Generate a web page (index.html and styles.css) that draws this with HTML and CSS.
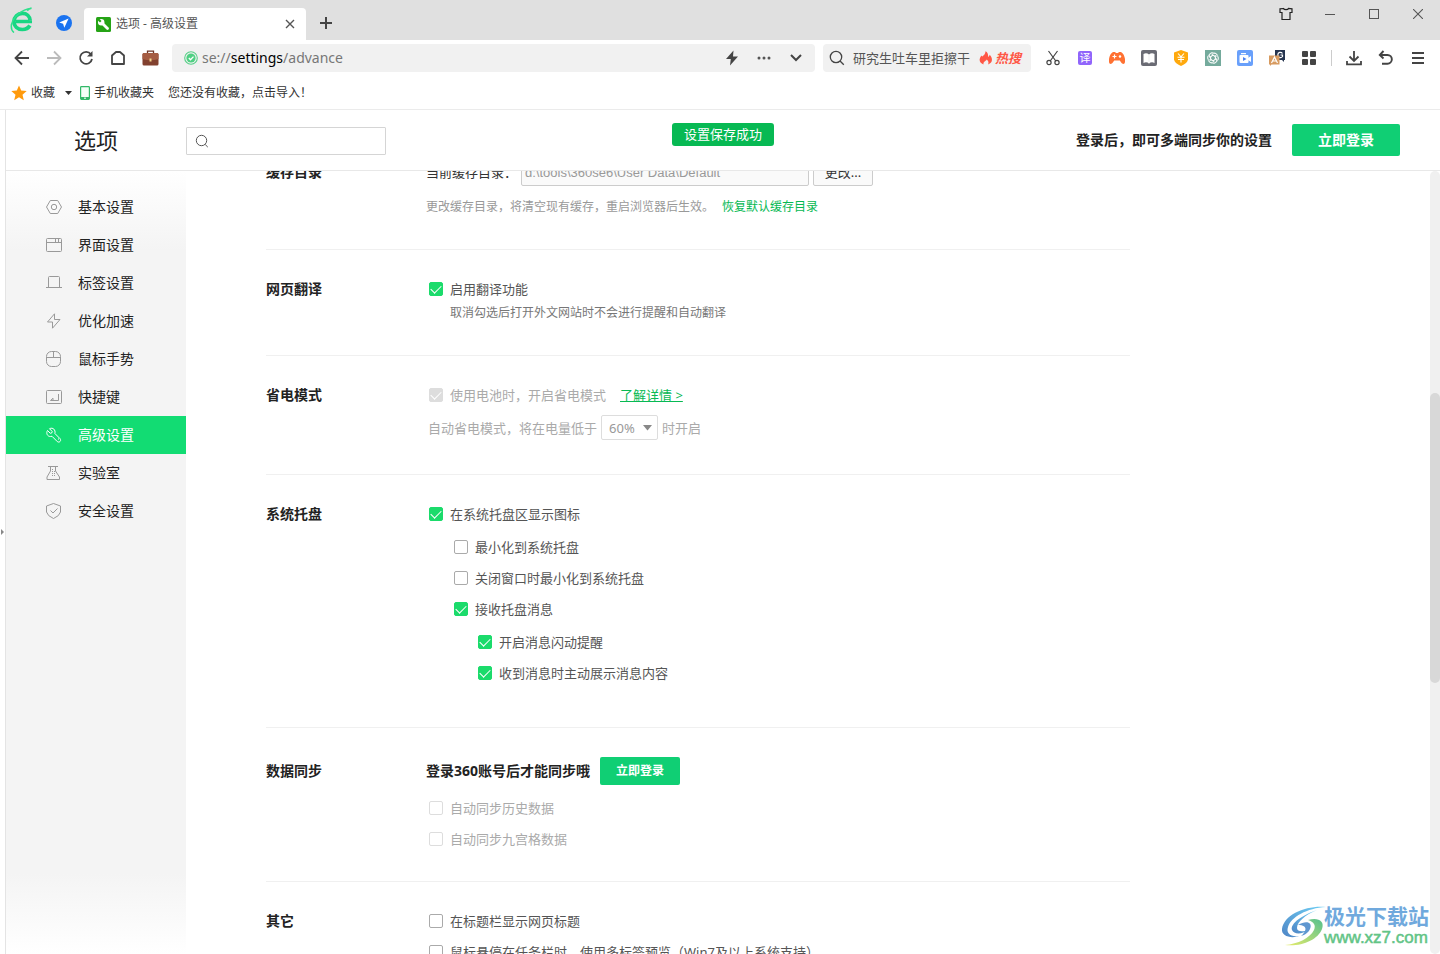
FILE: index.html
```html
<!DOCTYPE html>
<html lang="zh-CN">
<head>
<meta charset="utf-8">
<title>选项 - 高级设置</title>
<meta name="viewport" content="width=device-width, initial-scale=1">
<link rel="stylesheet" href="styles.css">
</head>
<body>
<div class="browser">
  <header class="tabbar">
    <svg class="logo" width="24" height="26" viewBox="0 0 24 26" fill="none" aria-hidden="true"><path d="M22 14.500H6M20.200 13.800C20 9 16.600 6.400 12.400 6.400 7.500 6.400 4 9.900 4 14.600s3.600 7.900 8.400 7.900c3.400 0 6-1.500 7.500-4" stroke="#19d683" stroke-width="3.700"/><path d="M1.500 17.500C3.500 10 11 2.500 21.500 1.300c-2 .5-3.300 1.300-4.300 2.300M1.500 17c-.6 4 .3 7 2.500 8.500" stroke="#2fe08c" stroke-width="1.500"/></svg>
    <button class="pin" aria-label="导航"><svg width="16" height="16" viewBox="0 0 16 16"><circle cx="8" cy="8" r="8" fill="#1a73f0"/><path d="M12.600 3.600 3.200 7.600l3.900 1.100 1.200 4z" fill="#fff"/></svg></button>
    <div class="tab">
      <svg width="15" height="15" viewBox="0 0 15 15"><rect width="15" height="15" rx="1.500" fill="#26a316"/><path d="m6.500 6.500 5 5" stroke="#fff" stroke-width="2.800" stroke-linecap="round"/><circle cx="5.200" cy="5.200" r="3.200" fill="#fff"/><path d="M1 2.500 2.500 1l3 3L4 5.500z" fill="#26a316"/></svg>
      <span class="tab-title">选项 - 高级设置</span>
      <button class="tab-close" aria-label="关闭标签"><svg width="10" height="10" viewBox="0 0 10 10"><path d="m1 1 8 8M9 1 1 9" stroke="#555" stroke-width="1.400"/></svg></button>
    </div>
    <button class="new-tab" aria-label="新标签"><svg width="12" height="12" viewBox="0 0 12 12"><path d="M6 0v12M0 6h12" stroke="#444" stroke-width="2"/></svg></button>
    <div class="window-controls">
      <button aria-label="皮肤"><svg width="14" height="14" viewBox="0 0 14 14" fill="none" stroke="#222" stroke-width="1.200"><path d="M4.500 1.500 1 1.800v3.700h2v7h8v-7h2V1.800l-3.500-.3C9 3 5 3 4.500 1.500z"/></svg></button>
      <button aria-label="最小化"><svg width="10" height="10" viewBox="0 0 10 10"><path d="M0 5.500h10" stroke="#555"/></svg></button>
      <button aria-label="最大化"><svg width="10" height="10" viewBox="0 0 10 10"><rect x=".5" y=".5" width="9" height="9" fill="none" stroke="#555"/></svg></button>
      <button aria-label="关闭"><svg width="10" height="10" viewBox="0 0 10 10"><path d="m0 0 10 10M10 0 0 10" stroke="#555" stroke-width="1.100"/></svg></button>
    </div>
  </header>

  <div class="toolbar">
    <button class="tool" aria-label="后退"><svg width="16" height="16" viewBox="0 0 16 16" fill="none" stroke="#444" stroke-width="1.800"><path d="M15 8H2M8 1.500 1.500 8 8 14.500"/></svg></button>
    <button class="tool" aria-label="前进"><svg width="16" height="16" viewBox="0 0 16 16" fill="none" stroke="#bbb" stroke-width="1.800"><path d="M1 8h13M8 1.500 14.500 8 8 14.500"/></svg></button>
    <button class="tool" aria-label="刷新"><svg width="16" height="16" viewBox="0 0 16 16" fill="none" stroke="#444" stroke-width="1.800"><path d="M12.900 4.200A6 6 0 1 0 14 9"/><path d="M14.500 1v5.500H9z" fill="#444" stroke="none"/></svg></button>
    <button class="tool" aria-label="主页"><svg width="16" height="16" viewBox="0 0 16 16" fill="none" stroke="#444" stroke-width="1.800" stroke-linejoin="round"><path d="M2 14V5.500L6 2h4l4 3.500V14z"/></svg></button>
    <button class="tool" aria-label="工具箱"><svg width="17" height="16" viewBox="0 0 17 16"><path d="M5.500 4V1.200h6V4" fill="none" stroke="#6d3526" stroke-width="1.300"/><rect x=".5" y="3" width="16" height="12.500" rx="1.500" fill="#82412f"/><path d="M.5 4.500Q.5 3 2 3h13q1.500 0 1.500 1.500V9q-8 2.500-16 0z" fill="#a55c42"/><path d="M7.500 8.500h2v3h-2z" fill="#f3d58b"/></svg></button>
    <div class="address">
      <svg width="14" height="14" viewBox="0 0 14 14" fill="none"><circle cx="7" cy="7" r="6.300" stroke="#58cf88" stroke-width="1.100"/><circle cx="7" cy="7" r="4.600" fill="#4fd083"/><path d="m4.800 7 1.700 1.700L9.500 5.600" stroke="#fff" stroke-width="1.300"/></svg>
      <span class="url">se://<b>settings</b>/advance</span>
      <button class="tool" aria-label="加速"><svg width="12" height="16" viewBox="0 0 12 16"><path d="M7.500.5 0 9h4.800L4 15.500 12 6.500H7z" fill="#444"/></svg></button>
      <button class="tool" aria-label="更多"><svg width="14" height="4" viewBox="0 0 14 4" fill="#555"><circle cx="2" cy="2" r="1.500"/><circle cx="7" cy="2" r="1.500"/><circle cx="12" cy="2" r="1.500"/></svg></button>
      <button class="tool" aria-label="展开"><svg width="12" height="8" viewBox="0 0 12 8"><path d="m1 1 5 5 5-5" fill="none" stroke="#444" stroke-width="2"/></svg></button>
    </div>
    <div class="quick-search">
      <svg width="16" height="16" viewBox="0 0 16 16" fill="none" stroke="#444" stroke-width="1.300"><circle cx="7" cy="7" r="5.700"/><path d="m11 11 3.800 3.800"/></svg>
      <span class="query">研究生吐车里拒擦干</span>
      <svg width="14" height="14" viewBox="0 0 14 14"><path d="M4.500 13.500C1 12.500 0 9.500 1 7c.5-1 1-1.500 1-2.500l1.300 1C4.800 4.500 6.500 3 6.500.3 9 1.500 9.300 4 9 6c1-.4 1.500-1.300 1.600-2.200C13.500 6.500 14.500 11.500 9 13.500c1-2 .3-3.500-1.300-5-.4 1.500-3.700 2-3.200 5z" fill="#ff5745"/></svg>
      <span class="hot">热搜</span>
    </div>
    <div class="extensions">
      <button class="tool" aria-label="截图"><svg width="14" height="16" viewBox="0 0 14 16" fill="none" stroke="#444" stroke-width="1.200"><path d="m2.500 1 7.300 10M11.500 1 4.200 11"/><circle cx="3" cy="12.500" r="2.100"/><circle cx="11" cy="12.500" r="2.100"/></svg></button>
      <button class="tool" aria-label="翻译"><span class="translate">译</span></button>
      <button class="tool" aria-label="游戏"><svg width="16" height="14" viewBox="0 0 16 14"><path d="M4 1h2l1 1h2l1-1h2c3 1.500 4.500 6.500 4 10-.3 2.500-2.500 2.500-4 .3L10.800 9.500H5.200L4 11.300C2.500 13.500.3 13.500 0 11-.5 7.500 1 2.500 4 1z" fill="#ff7132"/><path d="M3.500 5.500h4M5.500 3.500v4" stroke="#fff" stroke-width="1.200"/><circle cx="11" cy="5.500" r="1.200" fill="#fff"/></svg></button>
      <button class="tool" aria-label="阅读"><svg width="16" height="16" viewBox="0 0 16 16"><rect width="16" height="16" rx="2" fill="#6a6b74"/><path d="M2.500 4Q5.500 2.500 8 4.500 10.500 2.500 13.500 4v9Q10.500 11.500 8 13.500 5.500 11.500 2.500 13z" fill="#fff"/><path d="M8 4.500v9" stroke="#e4e4e8" stroke-width=".6"/></svg></button>
      <button class="tool" aria-label="省钱"><svg width="16" height="16" viewBox="0 0 16 16"><path d="m8 0 7 2.500v7Q14.500 13 8 16 1.500 13 1 9.500v-7z" fill="#ffa90d"/><path d="m5 3.500 3 3.300 3-3.300M4.500 7.300h7M5 9.500h6M8 7v5.500" fill="none" stroke="#fff" stroke-width="1.100"/></svg></button>
      <button class="tool" aria-label="智能助手"><svg width="16" height="16" viewBox="0 0 16 16"><path fill="#74aa9c" d="M0 0h16v16H0z"/><g fill="none" stroke="#fff" stroke-width=".8"><path id="petal" d="M8 5.200 5.700 6.500v4.200L3.800 9.600C2.300 8.600 2.300 6.800 3.500 5.700"/><use href="#petal" transform="rotate(60 8 8)"/><use href="#petal" transform="rotate(120 8 8)"/><use href="#petal" transform="rotate(180 8 8)"/><use href="#petal" transform="rotate(240 8 8)"/><use href="#petal" transform="rotate(300 8 8)"/><circle cx="8" cy="8" r="5.300" stroke-width=".6"/></g></svg></button>
      <button class="tool" aria-label="录屏"><svg width="16" height="16" viewBox="0 0 16 16"><rect width="16" height="16" rx="2" fill="#69a0fb"/><rect x="2.500" y="5" width="9" height="8" rx="1" fill="#fff"/><path d="m11 8 3-2v6l-3-2zM4 3h5v1.300H4z" fill="#fff"/><path d="m6 7 3.500 2L6 11z" fill="#4c83f0"/></svg></button>
      <button class="tool" aria-label="词典"><svg width="16" height="16" viewBox="0 0 16 16" fill="none"><path d="M6 0h10v10h-1v2l-2-2H6z" fill="#25344f"/><path d="M13.500 3.500C12 1.500 8.800 2.200 8.800 5s3.200 3.500 4.700 1.500V5H11.500" stroke="#fff" stroke-width="1.200"/><path d="M0 5.500h10.500v9H2.500L1 16v-1.500H0z" fill="#d79a5f"/><path d="m2.500 13 3-6 3 6M3.500 11h4" stroke="#fff" stroke-width="1.200"/></svg></button>
      <button class="tool" aria-label="扩展"><svg width="14" height="14" viewBox="0 0 14 14" fill="#444"><rect width="6" height="6" rx="1"/><rect x="8" width="6" height="6" rx="1"/><rect y="8" width="6" height="6" rx="1"/><rect x="8" y="8" width="6" height="6" rx="1"/></svg></button>
    </div>
    <div class="actions">
      <button class="tool" aria-label="下载"><svg width="16" height="16" viewBox="0 0 16 16" fill="none" stroke="#444" stroke-width="1.800"><path d="M8 1v10M3.500 6.500 8 11l4.500-4.500M1 11v3.300h14V11"/></svg></button>
      <button class="tool" aria-label="恢复"><svg width="16" height="16" viewBox="0 0 16 16" fill="none" stroke="#444" stroke-width="1.900"><path d="M2 5h7.500a4.300 4.300 0 0 1 0 8.700H4M5.500 1 1.800 5l3.700 3.500"/></svg></button>
      <button class="tool" aria-label="菜单"><svg width="12" height="12" viewBox="0 0 12 12"><path d="M0 1h12M0 6h12M0 11h12" stroke="#444" stroke-width="2"/></svg></button>
    </div>
  </div>

  <nav class="bookmarks" aria-label="收藏栏">
    <button class="fav"><svg width="16" height="16" viewBox="0 0 16 16"><path d="m8 .5 2.200 5.100 5.500.5-4.200 3.600 1.300 5.500L8 12.300l-4.800 2.900 1.300-5.500L.3 6.100l5.500-.5z" fill="#ff9a0c"/></svg><span>收藏</span><svg class="caret" width="7" height="4" viewBox="0 0 7 4"><path d="M0 0h7L3.500 4z" fill="#333"/></svg></button>
    <a href="#" class="mobile"><svg width="10" height="14" viewBox="0 0 10 14"><rect x=".6" y=".6" width="8.800" height="12.800" rx=".8" fill="#f4fff8" stroke="#32b868" stroke-width="1.200"/><path d="M1 11h8v2.500H1z" fill="#32b868"/><path d="M4 12.200h2" stroke="#fff"/></svg><span>手机收藏夹</span></a>
    <a href="#" class="import">您还没有收藏，点击导入！</a>
  </nav>

  <div class="viewport">
    <button class="gutter" aria-label="展开侧栏"><svg width="3" height="6" viewBox="0 0 3 6"><path d="M0 0v6l3-3z" fill="#888"/></svg></button>
    <div class="page">
      <header class="page-header">
        <h1>选项</h1>
        <label class="search"><svg width="14" height="14" viewBox="0 0 14 14" fill="none" stroke="#555"><circle cx="6.500" cy="6.500" r="5.200"/><path d="m10.200 10.500 2.600 2.600"/></svg><input type="search" aria-label="搜索设置"></label>
        <p class="login-tip">登录后，即可多端同步你的设置</p>
        <button class="login">立即登录</button>
        <div class="toast" role="status">设置保存成功</div>
      </header>

      <div class="page-body">
        <nav class="sidebar" aria-label="设置分类">
          <a href="#"><svg width="16" height="16" viewBox="0 0 16 16"><path d="M4.300 1.500h7.400L15.500 8l-3.800 6.500H4.300L.5 8z"/><circle cx="8" cy="8" r="2.700"/></svg>基本设置</a>
          <a href="#"><svg width="16" height="16" viewBox="0 0 16 16"><rect x=".5" y="1.500" width="15" height="13" rx="1"/><path d="M.5 5.500h15M9.500 1.500v4M12.500 1.500v4"/></svg>界面设置</a>
          <a href="#"><svg width="16" height="16" viewBox="0 0 16 16"><path d="M2.500 12.500v-10q0-1 1-1h9q1 0 1 1v10M0 12.500h16"/></svg>标签设置</a>
          <a href="#"><svg width="16" height="16" viewBox="0 0 16 16"><path d="M8.500.8 1.500 9h5v6.200L14 6.500H8.500z"/></svg>优化加速</a>
          <a href="#"><svg width="16" height="16" viewBox="0 0 16 16"><rect x=".5" y=".5" width="14" height="15" rx="5"/><path d="M.5 6.500h14M7.500.5v6"/></svg>鼠标手势</a>
          <a href="#"><svg width="16" height="16" viewBox="0 0 16 16"><rect x=".5" y="1.500" width="15" height="13" rx="1"/><path d="M12.500 5v6.500h-8l2.500-2.300v2.300"/></svg>快捷键</a>
          <a href="#" class="current" aria-current="page"><svg width="16" height="16" viewBox="0 0 16 16"><path d="m3.500 1.700 2.700 2.800-.4 1.400-1.500.4L1.500 3.500C0 6 1 9.500 4.500 9.500l1.500-.2 5.300 5.300c2 1.500 4.300-.8 2.900-2.800L8.900 6.500C9.800 3 7 0 3.500 1.700z"/><path d="M12 12h1"/></svg>高级设置</a>
          <a href="#"><svg width="16" height="16" viewBox="0 0 16 16"><path d="M2 1.500h10M4.500 1.500v4.500L1 12v2.500h12.500V12L9.500 6V1.500"/><path d="M6.500 4v7M8.500 6v5" stroke-dasharray="1 1"/></svg>实验室</a>
          <a href="#"><svg width="16" height="16" viewBox="0 0 16 16"><path d="m7.500.5 7 2.500v6q-1 4-7 6.500Q1.500 13 .5 9V3z"/><path d="m4.500 7.500 2.500 2.500 4.500-4.500"/></svg>安全设置</a>
        </nav>

        <main class="settings">
          <section class="group">
            <h2>缓存目录</h2>
            <div class="fields">
              <div class="path-row"><label for="cache">当前缓存目录：</label><input id="cache" type="text" value="d:\tools\360se6\User Data\Default" disabled><button>更改...</button></div>
              <p class="note">更改缓存目录，将清空现有缓存，重启浏览器后生效。<a href="#">恢复默认缓存目录</a></p>
            </div>
          </section>
          <section class="group">
            <h2>网页翻译</h2>
            <div class="fields">
              <label class="check"><input type="checkbox" checked>启用翻译功能</label>
              <p class="hint">取消勾选后打开外文网站时不会进行提醒和自动翻译</p>
            </div>
          </section>
          <section class="group">
            <h2>省电模式</h2>
            <div class="fields">
              <div class="power-row"><label class="check disabled"><input type="checkbox" checked disabled>使用电池时，开启省电模式</label><a href="#">了解详情 &gt;</a></div>
              <div class="level-row"><label for="level">自动省电模式，将在电量低于</label><span class="select"><select id="level" disabled><option>60%</option></select><svg width="9" height="6" viewBox="0 0 9 6"><path d="M0 0h9L4.500 5.500z" fill="#888"/></svg></span><span>时开启</span></div>
            </div>
          </section>
          <section class="group">
            <h2>系统托盘</h2>
            <div class="fields tree">
              <label class="check"><input type="checkbox" checked>在系统托盘区显示图标</label>
              <div class="branch">
                <label class="check"><input type="checkbox">最小化到系统托盘</label>
                <label class="check"><input type="checkbox">关闭窗口时最小化到系统托盘</label>
                <label class="check"><input type="checkbox" checked>接收托盘消息</label>
                <div class="branch">
                  <label class="check"><input type="checkbox" checked>开启消息闪动提醒</label>
                  <label class="check"><input type="checkbox" checked>收到消息时主动展示消息内容</label>
                </div>
              </div>
            </div>
          </section>
          <section class="group">
            <h2 class="tall">数据同步</h2>
            <div class="fields">
              <div class="sync-row"><strong>登录360账号后才能同步哦</strong><button class="login small">立即登录</button></div>
              <div class="stack">
                <label class="check disabled"><input type="checkbox" disabled>自动同步历史数据</label>
                <label class="check disabled"><input type="checkbox" disabled>自动同步九宫格数据</label>
              </div>
            </div>
          </section>
          <section class="group">
            <h2>其它</h2>
            <div class="fields stack">
              <label class="check"><input type="checkbox">在标题栏显示网页标题</label>
              <label class="check"><input type="checkbox">鼠标悬停在任务栏时，使用多标签预览（Win7及以上系统支持）</label>
            </div>
          </section>
        </main>
        <div class="scrollbar" aria-hidden="true"><span class="thumb"></span></div>
      </div>
    </div>
  </div>

  <div class="watermark">
    <svg width="46" height="42" viewBox="0 0 46 42" fill="none" aria-hidden="true">
      <defs><linearGradient id="blue" x1="0" y1="1" x2="1" y2="0"><stop offset="0" stop-color="#4f86c6"/><stop offset="1" stop-color="#6fd0f5"/></linearGradient><linearGradient id="green" x1="0" y1="1" x2="1" y2="0"><stop offset="0" stop-color="#e8ec6a"/><stop offset="1" stop-color="#55c08e"/></linearGradient></defs>
      <path d="M45 2C26 0 3 9 1 24c-1 7 9 10 17 7-9 1-13-3-11-9C10 12 26 3 45 2z" fill="url(#blue)"/>
      <path d="M36 5C22 10 9 18 11 25c2 5 11 4 16 0-5 2-11 2-11-2 0-6 8-13 20-18z" fill="url(#blue)"/>
      <path d="M17 20c8-5 15-3 12 4-1 3-5 6-9 7 5-4 8-11-3-11z" fill="#5e97d0"/>
      <path d="M27 15c10-3 17 1 14 9C37 35 20 42 4 40c13-1 25-7 29-15 2-5 0-8-6-10z" fill="url(#green)"/>
    </svg>
    <div class="watermark-text"><span>极光下载站</span><span class="site">www.xz7.com</span></div>
  </div>
</div>
</body>
</html>
```
FILE: styles.css
```css
* { box-sizing: border-box; }

body {
  margin: 0;
  font: 13px/20px "Noto Sans", "Noto Sans CJK SC", sans-serif;
  color: #555;
  background: #fff;
}

h1, h2, p { margin: 0; }
svg { display: block; flex: none; }
a { color: inherit; text-decoration: none; }

button, input, select { font: inherit; color: inherit; }

button {
  padding: 0;
  border: 0;
  background: none;
  cursor: pointer;
}

.browser {
  position: relative;
  display: flex;
  flex-direction: column;
  height: 100vh;
  overflow: hidden;
}

/* Tab strip */
.tabbar {
  display: flex;
  align-items: flex-end;
  height: 40px;
  padding-left: 10px;
  background: #e0e0e0;
}

.logo { margin-bottom: 7px; }

.pin {
  display: grid;
  place-items: center;
  width: 40px;
  height: 34px;
  margin-left: 10px;
}

.tab {
  display: flex;
  align-items: center;
  gap: 5px;
  width: 222px;
  height: 32px;
  padding: 0 11px 0 12px;
  border-radius: 4px 4px 0 0;
  background: #fff;
  font-size: 12px;
}

.tab-title { flex: 1; }

.new-tab {
  display: grid;
  place-items: center;
  width: 40px;
  height: 34px;
}

.window-controls {
  display: flex;
  align-self: flex-start;
  margin-left: auto;
}

.window-controls button {
  display: grid;
  place-items: center;
  width: 44px;
  height: 28px;
}

/* Toolbar */
.toolbar {
  display: flex;
  align-items: center;
  height: 36px;
  padding: 0 6px;
}

.tool {
  display: grid;
  flex: none;
  place-items: center;
  width: 32px;
  height: 28px;
}

.address {
  display: flex;
  flex: 1;
  align-items: center;
  height: 28px;
  margin-left: 6px;
  padding: 0 3px 0 12px;
  border-radius: 4px;
  background: #f1f1f1;
}

.url {
  flex: 1;
  margin-left: 4px;
  font-size: 14px;
  color: #777;
}

.url b { font-weight: 400; color: #000; }

.quick-search {
  display: flex;
  align-items: center;
  width: 208px;
  height: 28px;
  margin-left: 8px;
  padding: 0 6px;
  border-radius: 4px;
  background: #f1f1f1;
}

.query { margin: 0 9px 0 8px; }

.hot {
  margin-left: 2px;
  font-style: italic;
  font-weight: 700;
  color: #ff5745;
}

.extensions, .actions { display: flex; }
.extensions { margin-left: 6px; }

.actions {
  align-items: center;
  margin-left: 6px;
}

.actions::before {
  content: "";
  width: 1px;
  height: 16px;
  margin-right: 6px;
  background: #ccc;
}

.translate {
  width: 14px;
  height: 14px;
  border-radius: 2px;
  background: #9065fb;
  font-size: 11px;
  line-height: 14px;
  color: #fff;
}

/* Bookmarks */
.bookmarks {
  display: flex;
  align-items: center;
  height: 34px;
  padding: 0 11px;
  border-bottom: 1px solid #ebebeb;
  font-size: 12px;
  color: #333;
}

.fav, .mobile { display: flex; align-items: center; gap: 4px; }
.fav .caret { margin-left: 6px; }
.mobile { margin-left: 8px; }
.import { margin-left: 14px; }

/* Options page */
.viewport {
  display: flex;
  flex: 1;
  min-height: 0;
}

.gutter {
  width: 6px;
  padding-left: 1px;
  border-right: 1px solid #e4e4e4;
}

.page {
  display: flex;
  flex: 1;
  flex-direction: column;
  min-width: 0;
}

.page-header {
  position: relative;
  display: flex;
  align-items: center;
  height: 61px;
  padding-right: 40px;
  border-bottom: 1px solid #e8e8e8;
}

.page-header h1 {
  width: 180px;
  font-size: 22px;
  font-weight: 400;
  line-height: 32px;
  text-align: center;
  color: #222;
}

.search {
  display: flex;
  align-items: center;
  gap: 6px;
  width: 200px;
  height: 28px;
  margin-top: 2px;
  padding: 0 8px;
  border: 1px solid #d5d5d5;
  border-radius: 1px;
}

.search input {
  flex: 1;
  min-width: 0;
  border: 0;
  outline: 0;
  background: none;
}

.login-tip {
  margin-left: auto;
  font-size: 14px;
  font-weight: 700;
  color: #222;
}

.login {
  width: 108px;
  height: 32px;
  margin-left: 20px;
  border-radius: 2px;
  background: #10cf74;
  font-size: 14px;
  font-weight: 700;
  color: #fff;
}

.login.small {
  width: 80px;
  height: 28px;
  margin-left: 10px;
  font-size: 12px;
}

.toast {
  position: absolute;
  top: 13px;
  left: 50%;
  padding: 0 12px;
  border-radius: 3px;
  background: #07b953;
  line-height: 23px;
  color: #fff;
  transform: translateX(-50%);
}

.page-body {
  display: flex;
  flex: 1;
  min-height: 0;
  overflow: hidden;
}

.sidebar {
  width: 180px;
  padding-top: 17px;
  background: linear-gradient(#fff, #f4f4f4 80px, #f4f4f4 calc(100% - 80px), #fff);
  font-size: 14px;
  color: #222;
}

.sidebar a {
  display: flex;
  align-items: center;
  gap: 16px;
  height: 38px;
  padding-left: 40px;
}

.sidebar svg { fill: none; stroke: #999; }
.sidebar .current { background: #12dc73; color: #fff; }
.sidebar .current svg { stroke: #fff; }

.settings {
  flex: 0 1 864px;
  margin: -13px auto 0 80px;
}

.group {
  display: grid;
  grid-template-columns: 160px 1fr;
  align-items: start;
  padding: 29px 0 32px;
  border-bottom: 1px solid #f0f0f0;
}

.group:first-child { padding-top: 0; }
.group:last-child { border-bottom: 0; }

.group h2 {
  font-size: 14px;
  line-height: 20px;
  color: #222;
}

.group:first-child h2, .group .tall { line-height: 28px; }

.check {
  display: flex;
  align-items: center;
  gap: 7px;
  height: 20px;
  padding-left: 3px;
}

.check input {
  display: grid;
  flex: none;
  place-items: center;
  width: 14px;
  height: 14px;
  margin: 0;
  border: 1px solid #aaa;
  border-radius: 2px;
  background: #fff;
  appearance: none;
}

.check input:checked { border-color: #1bdb6b; background: #1bdb6b; }

.check input:checked::after {
  content: "";
  width: 9px;
  height: 5px;
  border: solid #fff;
  border-width: 0 0 1px 1px;
  transform: translateY(-1px) rotate(-45deg);
}

.check.disabled, .level-row { color: #aaa; }
.check input:disabled { border-color: #ddd; }
.check input:disabled:checked { background: #ddd; }

.path-row { display: flex; align-items: center; color: #333; }

.path-row input {
  width: 288px;
  height: 28px;
  margin-left: 4px;
  padding: 0 3px;
  border: 1px solid #ccc;
  border-radius: 2px;
  background: #fafafa;
  font-family: "Liberation Sans", sans-serif;
  color: #999;
}

.path-row button {
  width: 60px;
  height: 28px;
  margin-left: 4px;
  border: 1px solid #ccc;
  border-radius: 2px;
  background: #fafafa;
}

.note {
  margin-top: 11px;
  font-size: 12px;
  color: #999;
}

.note a { margin-left: 8px; color: #07b953; }

.hint {
  margin: 4px 0 0 24px;
  font-size: 12px;
  color: #777;
}

.power-row { display: flex; align-items: center; height: 20px; }

.power-row a {
  margin-left: 14px;
  color: #07b953;
  text-decoration: underline;
}

.level-row {
  display: flex;
  align-items: center;
  gap: 4px;
  height: 29px;
  margin-top: 8px;
  padding-left: 2px;
}

.select { position: relative; }

.select select {
  display: block;
  width: 57px;
  height: 25px;
  padding: 0 7px;
  border: 1px solid #ddd;
  border-radius: 2px;
  background: #fff;
  color: #999;
  opacity: 1;
  appearance: none;
}

.select svg {
  position: absolute;
  top: 10px;
  right: 6px;
  pointer-events: none;
}

.stack, .tree, .branch {
  display: flex;
  flex-direction: column;
  gap: 11px;
}

.tree { padding-bottom: 12px; }
.branch { margin-top: 2px; padding-left: 25px; }
.branch .branch { padding-left: 24px; }

.sync-row {
  display: flex;
  align-items: center;
  margin-bottom: 13px;
  font-size: 14px;
  color: #222;
}

.scrollbar {
  width: 10px;
  border-radius: 5px;
  background: #f0f0f0;
}

.thumb {
  display: block;
  height: 37%;
  margin-top: 222px;
  border-radius: 5px;
  background: #d8d8d8;
}

/* Corner mark */
.watermark {
  position: absolute;
  right: 11px;
  bottom: 6px;
  display: flex;
  align-items: center;
}

.watermark-text {
  display: flex;
  flex-direction: column;
  margin-left: -3px;
  font-size: 21px;
  font-weight: 700;
  line-height: 24px;
  color: #70a9dd;
}

.site {
  font: 17px/20px "Liberation Sans", sans-serif;
  color: #62c486;
  -webkit-text-stroke: 0.5px;
}
```
